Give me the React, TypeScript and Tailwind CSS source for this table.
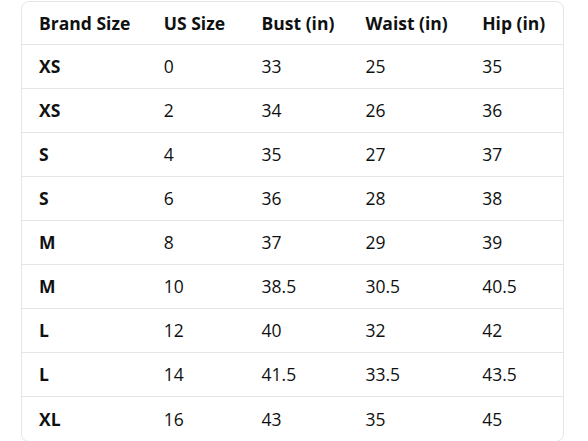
import React from "react";

const rows: [string, string, string, string, string][] = [
  ["XS", "0", "33", "25", "35"],
  ["XS", "2", "34", "26", "36"],
  ["S", "4", "35", "27", "37"],
  ["S", "6", "36", "28", "38"],
  ["M", "8", "37", "29", "39"],
  ["M", "10", "38.5", "30.5", "40.5"],
  ["L", "12", "40", "32", "42"],
  ["L", "14", "41.5", "33.5", "43.5"],
  ["XL", "16", "43", "35", "45"],
];

const headers = ["Brand Size", "US Size", "Bust (in)", "Waist (in)", "Hip (in)"];
const widths = ["w-[125px]", "w-[98px]", "w-[104px]", "w-[117px]", "w-[98px]"];

export default function App() {
  return (
    <div className="w-[588px] h-[441px] bg-white pt-[1px] pl-[21px] font-['Open_Sans',sans-serif] text-[#0f1111]">
      <div className="w-[543px] border border-[#e3e6e6] rounded-[8px] overflow-hidden">
        <div className="flex h-[43px] items-center border-b border-[#e3e6e6]">
          {headers.map((h, i) => (
            <div key={h} className={`${widths[i]} pl-[17px] text-[17.5px] font-bold whitespace-nowrap`}>
              {h}
            </div>
          ))}
        </div>
        {rows.map((r, ri) => (
          <div
            key={ri}
            className={`flex h-[44px] items-center ${ri < rows.length - 1 ? "border-b border-[#e3e6e6]" : ""}`}
          >
            {r.map((c, i) => (
              <div
                key={i}
                className={`${widths[i]} pl-[17px] text-[17.5px] ${i === 0 ? "font-bold" : "font-normal"}`}
              >
                {c}
              </div>
            ))}
          </div>
        ))}
      </div>
    </div>
  );
}
